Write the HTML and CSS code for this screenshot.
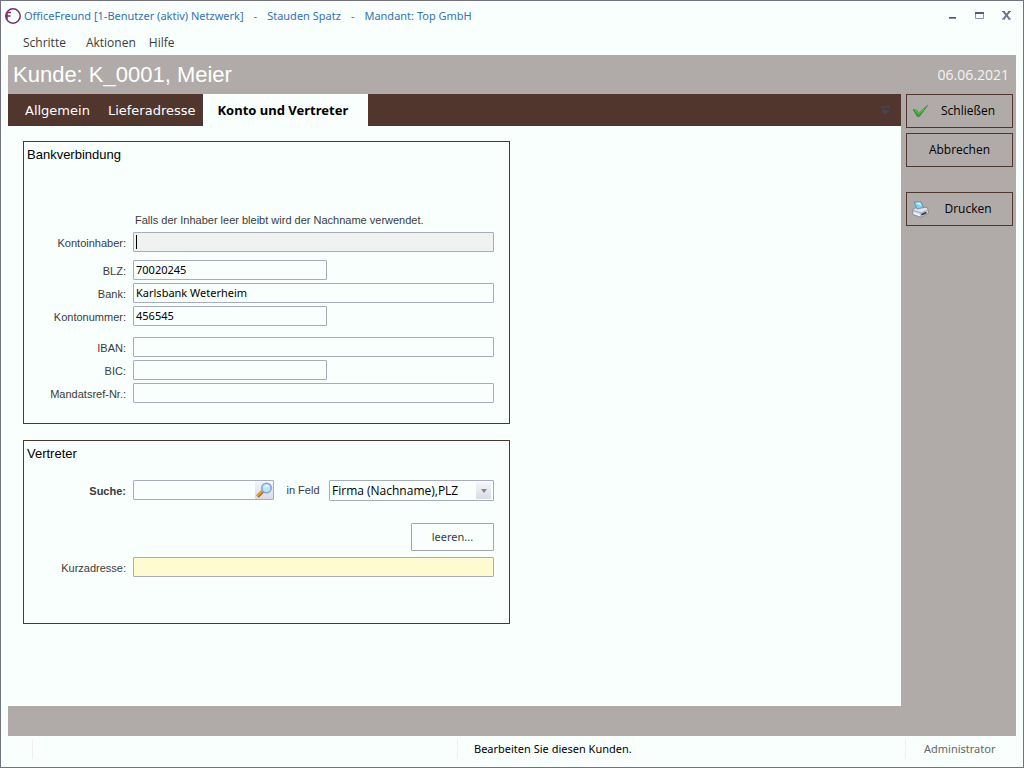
FILE: index.html
```html
<!DOCTYPE html>
<html lang="de">
<head>
<meta charset="utf-8">
<title>OfficeFreund</title>
<link rel="stylesheet" href="styles.css">
</head>
<body>
<div class="window">
  <header class="titlebar">
    <svg class="app-logo" width="18" height="18" viewBox="0 0 18 18" fill="none" stroke="#7d2a6b">
      <circle cx="9" cy="9" r="7.2" stroke-width="1.5"/>
      <path d="M7 5.5H3.5M6.5 9H1M3 5.5V12" stroke-width="1.5"/>
    </svg>
    <h1 class="app-title"><span>OfficeFreund [1-Benutzer (aktiv) Netzwerk]</span><span>-</span><span>Stauden Spatz</span><span>-</span><span>Mandant: Top GmbH</span></h1>
    <div class="window-controls">
      <button type="button" aria-label="Minimieren"><svg width="9" height="9" viewBox="0 0 9 9"><path d="M1 6H8V7H1Z" fill="#4f5368"/><path d="M1 7H8V8H1Z" fill="#8d92a8"/></svg></button>
      <button type="button" aria-label="Maximieren"><svg width="9" height="9" viewBox="0 0 9 9"><path d="M.5 2.500H8.500V7.500H.5Z" fill="none" stroke="#8d92ab"/><path d="M0 1H9V3H0Z" fill="#575b70"/></svg></button>
      <button type="button" aria-label="Fenster schließen"><svg width="9" height="9" viewBox="0 0 9 9"><path d="M1.500 .5L7.500 8M7.500 .5L1.500 8" stroke="#6c7189" stroke-width="2"/><path d="M0 .5H3M6 .5H9M0 8H3M6 8H9" stroke="#6c7189"/></svg></button>
    </div>
  </header>
  <nav class="menubar">
    <button type="button" class="menu-first">Schritte</button>
    <button type="button">Aktionen</button>
    <button type="button">Hilfe</button>
  </nav>
  <main class="frame">
    <div class="record-head">
      <h2>Kunde: K_0001, Meier</h2>
      <time datetime="2021-06-06">06.06.2021</time>
    </div>
    <div class="workspace">
      <section class="content">
        <div class="tabs" role="tablist">
          <button type="button" role="tab" class="tab">Allgemein</button>
          <button type="button" role="tab" class="tab">Lieferadresse</button>
          <button type="button" role="tab" class="tab tab-active" aria-selected="true">Konto und Vertreter</button>
          <button type="button" class="tab-list" aria-label="Alle Register"><svg width="9" height="9" viewBox="0 0 9 9" fill="#40454f"><path d="M0 0H9V2H0ZM1 4H8V5.500L4.500 9L1 5.500Z"/></svg></button>
        </div>
        <form class="panel">
          <section class="group group-bank">
            <h3>Bankverbindung</h3>
            <p class="hint">Falls der Inhaber leer bleibt wird der Nachname verwendet.</p>
            <div class="row"><label for="inhaber">Kontoinhaber:</label><div class="field"><input id="inhaber" type="text" class="focus-bg"><span class="caret"></span></div></div>
            <div class="row row-apart"><label for="blz">BLZ:</label><input id="blz" class="short" type="text" value="70020245"></div>
            <div class="row"><label for="bank">Bank:</label><input id="bank" type="text" value="Karlsbank Weterheim"></div>
            <div class="row"><label for="konto">Kontonummer:</label><input id="konto" class="short" type="text" value="456545"></div>
            <div class="row row-apart-wide"><label for="iban">IBAN:</label><input id="iban" type="text"></div>
            <div class="row"><label for="bic">BIC:</label><input id="bic" class="short" type="text"></div>
            <div class="row"><label for="mandat">Mandatsref-Nr.:</label><input id="mandat" type="text"></div>
          </section>
          <section class="group group-agent">
            <h3>Vertreter</h3>
            <div class="row row-search">
              <label for="suche" class="strong">Suche:</label>
              <div class="search-line">
                <div class="field">
                  <input id="suche" type="text">
                  <button type="button" class="search-button" aria-label="Suchen"><svg width="18" height="17" viewBox="0 0 18 17"><path d="M2.500 14.500L8 9" stroke="#a8670f" stroke-width="3.600"/><path d="M2 14L7.500 8.700" stroke="#f0a11c" stroke-width="2"/><circle cx="11.500" cy="6" r="4.700" fill="#b9e4fa" stroke="#8ba3cf" stroke-width="1.600"/><path d="M8.800 5.500Q9.500 3 12 3Q14 3.500 13.500 5Q11 4.700 8.800 5.500Z" fill="#e6f8ff"/></svg></button>
                </div>
                <label for="feld" class="field-label">in Feld</label>
                <div class="field">
                  <select id="feld"><option>Firma (Nachname),PLZ</option></select>
                  <span class="drop"><svg width="6" height="4" viewBox="0 0 6 4"><path d="M0 0H6L3 4Z" fill="#85858a"/></svg></span>
                </div>
              </div>
            </div>
            <div class="actions"><button type="button" class="clear">leeren...</button></div>
            <div class="row"><label for="kurz">Kurzadresse:</label><input id="kurz" class="lookup" type="text" readonly></div>
          </section>
        </form>
      </section>
      <aside class="side">
        <button type="button" class="command"><svg width="17" height="16" viewBox="0 0 17 16"><path d="M1 6.500L4.500 7L6.500 10L16 2L7.500 13.500L5.500 14Z" fill="#22a522" stroke="#5b7c50" stroke-width=".7"/><path d="M3 7L6.500 11L12 6" stroke="#59d34b" fill="none"/></svg><span>Schließen</span></button>
        <button type="button" class="command"><span>Abbrechen</span></button>
        <button type="button" class="command command-apart"><svg width="17" height="17" viewBox="0 0 17 17"><path d="M.7 8.500L5 6L15 6.500L16.300 9V12.500L9 16.300L.7 13.500Z" fill="#dfe1e7" stroke="#7c8392" stroke-width=".8"/><path d="M1 9.500L9 12L16 9M9 12V16" fill="none" stroke="#8990a0" stroke-width=".8"/><path d="M2 1.200L9 .8L11.500 6.500L5 8Z" fill="#7cd3f2" stroke="#5a7f9b" stroke-width=".7"/><path d="M3.500 2L8 1.500L9.500 5Z" fill="#d4f5ff"/><path d="M9.500 13.800L14.500 11.500" stroke="#252b3a" stroke-width="1.500"/><path d="M2.500 12.500L8 14.500" stroke="#fff"/></svg><span>Drucken</span></button>
      </aside>
    </div>
  </main>
  <footer class="status">
    <span class="status-left"></span>
    <span class="status-text">Bearbeiten Sie diesen Kunden.</span>
    <span class="status-user">Administrator</span>
  </footer>
</div>
</body>
</html>
```
FILE: styles.css
```css
* { box-sizing: border-box; }
body { margin: 0; font-family: "Open Sans", sans-serif; font-size: 12px; color: #3b3b3b; }
button, input, select { font: inherit; color: inherit; margin: 0; }
button { background: none; border: 0; padding: 0; }
h1, h2, h3, p { margin: 0; font-weight: 400; }
svg { display: block; }

.window { min-height: 100vh; display: flex; flex-direction: column; background: #f8fffd; border: 1px solid #73737f; }

.titlebar { display: flex; align-items: center; height: 29px; padding: 0 12px 0 3px; }
.app-title { display: flex; gap: 10px; flex: 1; margin-left: 2px; font-family: "Noto Sans", sans-serif; font-size: 11px; color: #3672b4; }
.window-controls { display: flex; gap: 18px; }

.menubar { display: flex; gap: 13px; height: 25px; align-items: center; padding-left: 22px; }
.menu-first { margin-right: 7px; }

.frame { flex: 1; display: flex; flex-direction: column; margin: 0 7px; padding-bottom: 30px; background: #b0aba8; }
.record-head { display: flex; align-items: center; justify-content: space-between; height: 39px; padding: 0 7px 0 5px; color: #fff; }
.record-head h2 { font-family: "Liberation Sans", sans-serif; font-size: 22px; }
.record-head time { font-size: 14px; color: #f4f4f4; }

.workspace { flex: 1; display: flex; }
.content { flex: 1; display: flex; flex-direction: column; background: #f8fffd; }
.tabs { display: flex; height: 32px; padding-left: 7px; background: #50362c; color: #fff; font-family: "DejaVu Sans", sans-serif; font-size: 13px; }
.tab { padding: 0 8px 0 10px; }
.tab-active { padding: 0 20px 0 14px; background: #f8fffd; color: #000; font-family: "Noto Sans", sans-serif; font-weight: 700; }
.tab-list { margin-left: auto; padding-right: 11px; }

.panel { padding: 15px; display: flex; flex-direction: column; align-items: flex-start; gap: 16px; }
.group { width: 487px; border: 1px solid #50362c; padding: 4px 15px 0 0; display: flex; flex-direction: column; gap: 3px; font-family: "Liberation Sans", sans-serif; font-size: 11px; }
.group h3 { padding-left: 3px; font-size: 13px; line-height: 17px; color: #000; }
.group-bank { padding-bottom: 20px; }
.group-agent { padding-bottom: 46px; }
.hint { margin: 47px 0 1px 111px; line-height: 15px; }
.row { display: grid; grid-template-columns: 102px 1fr; column-gap: 7px; align-items: start; }
.row > label { text-align: right; line-height: 22px; height: 20px; }
.row-apart { margin-top: 5px; }
.row-apart-wide { margin-top: 8px; }
.row-search { margin-top: 15px; }
.strong { font-weight: 700; }
.group input, .group select { width: 100%; height: 20px; padding: 0 2px 2px; border: 1px solid #a6adb8; border-radius: 1px; background: #f8fffd; color: #000; outline: 0; font-family: "Noto Sans", sans-serif; font-size: 11px; }
.group input.short { width: 194px; }
.group input.focus-bg { background: #f0f2f1; }
.group input.lookup { background: #fffbd0; }
.field { position: relative; display: flex; }
.caret { position: absolute; left: 3px; top: 3px; width: 1px; height: 14px; background: #000; }
.search-line { display: grid; grid-template-columns: 141px auto 165px; justify-content: space-between; align-items: start; }
.field-label { padding-left: 3px; line-height: 21px; }
.search-button, .drop { position: absolute; right: 1px; top: 1px; bottom: 1px; display: grid; place-items: center; background: linear-gradient(#f5f6fa, #d9dbe6); }
.search-button { width: 18px; }
.group select { height: 21px; padding-bottom: 0; appearance: none; font-family: "Open Sans", sans-serif; font-size: 12px; }
.drop { right: 3px; top: 2px; bottom: 2px; width: 15px; pointer-events: none; }
.actions { display: flex; justify-content: flex-end; margin: 19px 0 3px; }
.clear { width: 83px; height: 28px; padding-bottom: 1px; border: 1px solid #a3a5a8; border-radius: 1px; font-family: "Noto Sans", sans-serif; font-size: 11px; }

.side { width: 115px; padding: 0 3px 0 5px; }
.command { display: flex; align-items: center; width: 100%; height: 34px; margin-bottom: 5px; padding: 0 5px; border: 1px solid #50362c; color: #000; }
.command span { flex: 1; padding-bottom: 1px; }
.command-apart { margin-top: 25px; }

.status { display: grid; grid-template-columns: 425px 1fr 118px; align-items: center; height: 31px; margin-left: 31px; padding-bottom: 6px; font-family: "Noto Sans", sans-serif; font-size: 11px; }
.status span { height: 20px; line-height: 20px; border-left: 1px solid #f3eeee; }
.status-text { padding-left: 16px; color: #000; }
.status-user { padding-left: 18px; color: #666; }
```
